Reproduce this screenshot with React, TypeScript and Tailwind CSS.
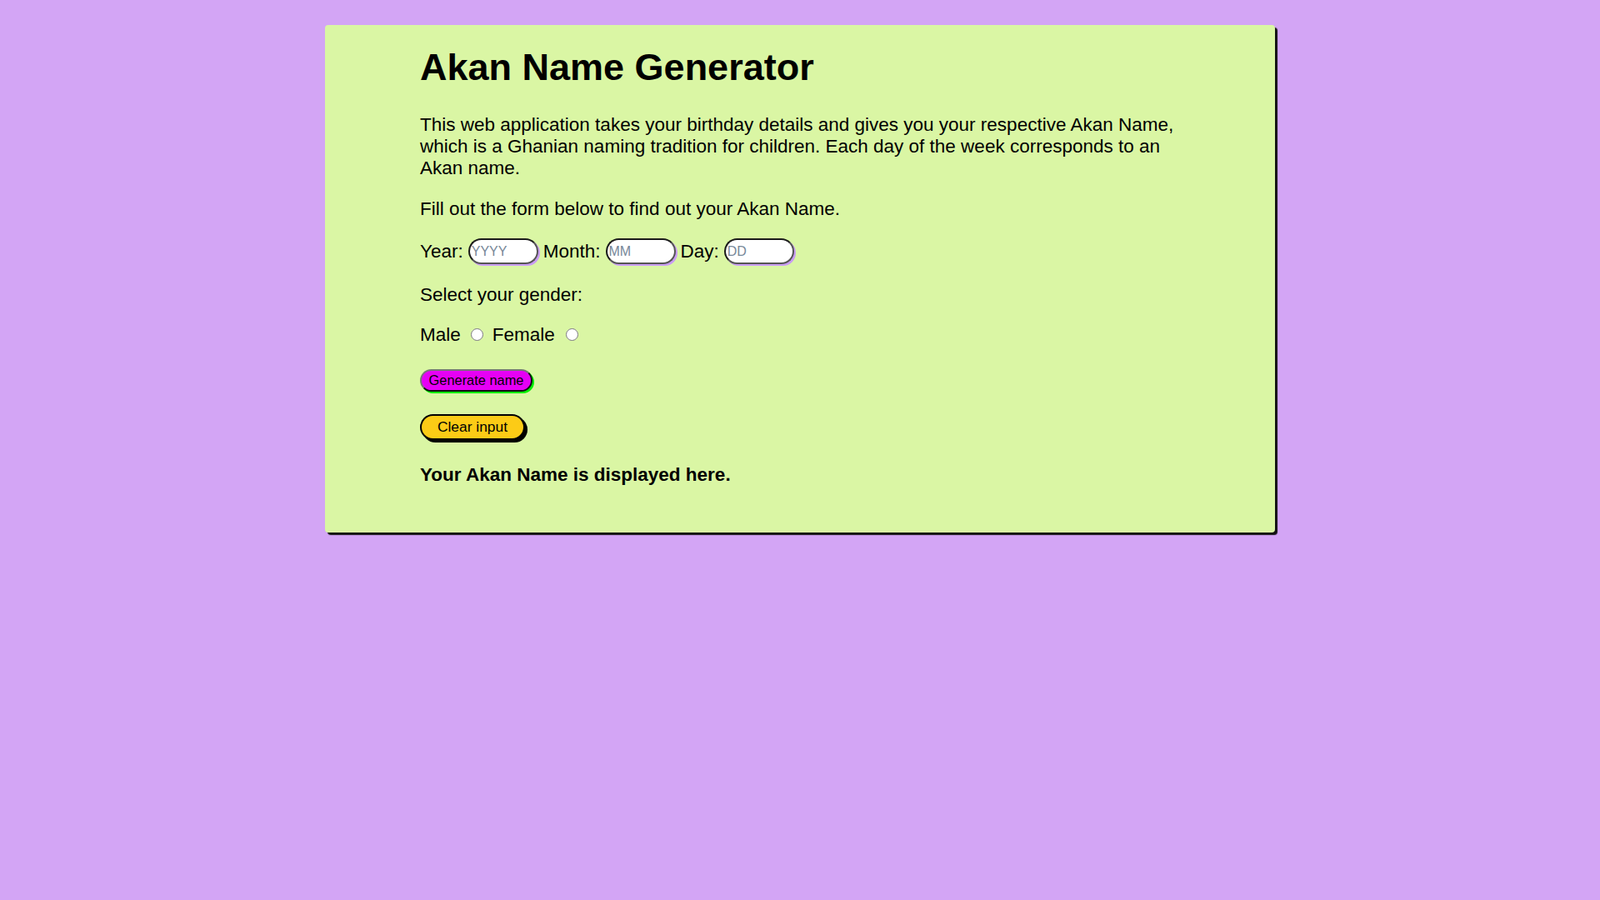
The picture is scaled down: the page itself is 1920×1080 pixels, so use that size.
import { useState } from "react";

export default function App() {
  const [year, setYear] = useState("");
  const [month, setMonth] = useState("");
  const [day, setDay] = useState("");
  const [gender, setGender] = useState("");
  const [result, setResult] = useState("Your Akan Name is displayed here.");

  const inputCls =
    "h-[31px] w-[84px] rounded-full border-2 border-t-[#1a1a1a] border-l-[#1a1a1a] border-r-[#555] border-b-[#555] bg-white px-[2px] text-[16px] text-black shadow-[2px_2px_0_#c99cf3] outline-none placeholder:text-[#778899]";

  const clear = () => {
    setYear("");
    setMonth("");
    setDay("");
    setGender("");
    setResult("Your Akan Name is displayed here.");
  };

  return (
    <div className="min-h-screen bg-[#d3a5f5] pt-[30px] font-['Liberation_Sans',Arial,sans-serif] text-black">
      <div className="mx-auto w-[1140px] rounded-[4px] bg-[#daf6a4] pb-[56px] pl-[114px] pr-[114px] pt-[25px] text-[22.5px] leading-[26px] shadow-[3px_3px_1px_#111]">
        <h1 className="mb-[30px] text-[45px] font-bold leading-[52px]">
          Akan Name Generator
        </h1>
        <p>
          This web application takes your birthday details and gives you your
          respective Akan Name, which is a Ghanian naming tradition for
          children. Each day of the week corresponds to an Akan name.
        </p>
        <p className="mt-[23px]">
          Fill out the form below to find out your Akan Name.
        </p>

        <div className="mt-[21.4px] flex h-[33px] items-center gap-[6px]">
          <label htmlFor="year">Year:</label>
          <input
            id="year"
            className={inputCls}
            placeholder="YYYY"
            value={year}
            onChange={(e) => setYear(e.target.value)}
          />
          <label htmlFor="month">Month:</label>
          <input
            id="month"
            className={inputCls}
            placeholder="MM"
            value={month}
            onChange={(e) => setMonth(e.target.value)}
          />
          <label htmlFor="day">Day:</label>
          <input
            id="day"
            className={inputCls}
            placeholder="DD"
            value={day}
            onChange={(e) => setDay(e.target.value)}
          />
        </div>

        <p className="mt-[23px]">Select your gender:</p>

        <div className="mt-[21.6px] flex items-center">
          <span>Male</span>
          <input
            type="radio"
            name="gender"
            checked={gender === "male"}
            onChange={() => setGender("male")}
            className="ml-[12px] h-[15px] w-[15px]"
          />
          <span className="ml-[11px]">Female</span>
          <input
            type="radio"
            name="gender"
            checked={gender === "female"}
            onChange={() => setGender("female")}
            className="ml-[13px] h-[15px] w-[15px]"
          />
        </div>

        <div className="mt-[27.6px] flex">
          <button
            type="button"
            onClick={() => setResult("Your Akan Name is displayed here.")}
            className="h-[27px] w-[135px] rounded-full border-2 border-t-[#777] border-l-[#777] border-r-[#111] border-b-[#111] bg-[#e600f5] text-[16.4px] leading-none text-black shadow-[2px_2px_0_#00f000]"
          >
            Generate name
          </button>
        </div>

        <div className="mt-[27.6px] flex">
          <button
            type="button"
            onClick={clear}
            className="h-[31px] w-[126px] rounded-full border-2 border-black bg-[#fccb16] text-[17.4px] leading-none text-black shadow-[3px_3px_0_#000]"
          >
            Clear input
          </button>
        </div>

        <p className="mt-[29.2px] font-bold">{result}</p>
      </div>
    </div>
  );
}
